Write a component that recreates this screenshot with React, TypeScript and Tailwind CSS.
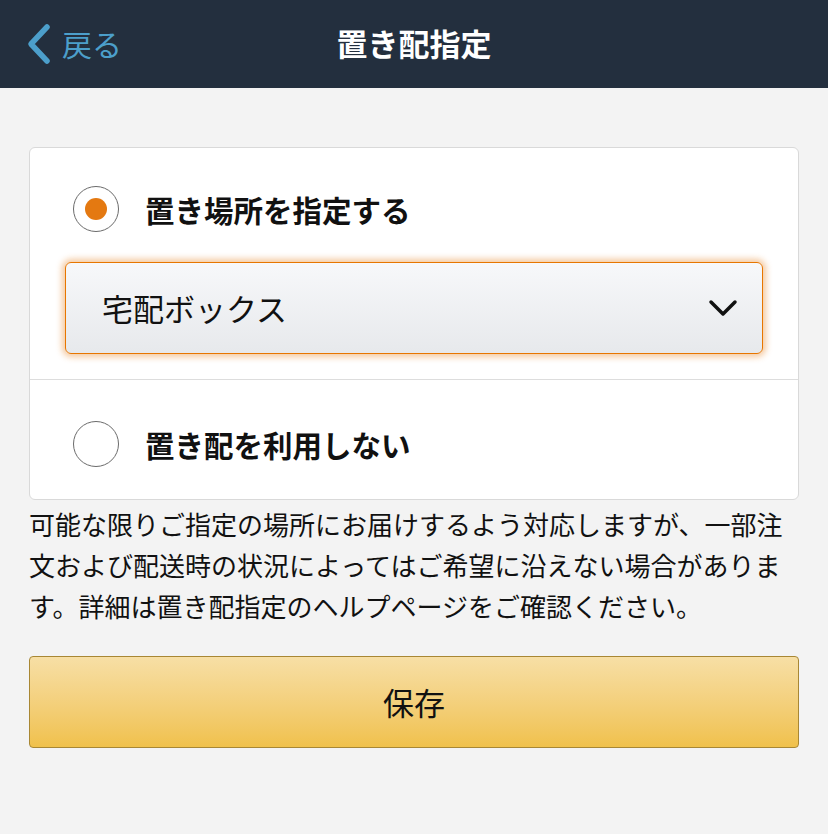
import React, { useState } from "react";

const font = { fontFamily: '"Noto Sans CJK JP", "Noto Sans", sans-serif' };

const Radio = ({ checked }: { checked: boolean }) => (
  <span className="flex h-[46px] w-[46px] shrink-0 items-center justify-center rounded-full border-[1.5px] border-[#6b6b6b] bg-white">
    {checked && <span className="h-[22px] w-[22px] rounded-full bg-[#e47911]" />}
  </span>
);

const App = () => {
  const [useDrop, setUseDrop] = useState<boolean>(true);
  return (
    <div className="min-h-[834px] w-[828px] bg-[#f3f3f3]" style={font}>
      <header className="relative flex h-[88px] items-center bg-[#232f3e]">
        <a href="#" className="flex items-center gap-[10px] pl-[26px] text-[30px] text-[#4c9fcb]">
          <svg width="26" height="42" viewBox="0 0 26 42" fill="none">
            <path d="M21 4 L5 21 L21 38" stroke="#4c9fcb" strokeWidth="5.5" strokeLinecap="round" strokeLinejoin="round" />
          </svg>
          <span className="leading-none -mt-[2px]">戻る</span>
        </a>
        <h1 className="absolute left-1/2 -translate-x-1/2 -mt-[4px] text-[31px] font-bold leading-none text-white">
          置き配指定
        </h1>
      </header>

      <main className="px-[29px] pt-[59px]">
        <div className="rounded-[6px] border border-[#d9d9d9] bg-white">
          <div className="px-[35px] pt-[38px] pb-[25px]">
            <button
              type="button"
              className="flex items-center gap-[26px] pl-[8px]"
              onClick={() => setUseDrop(true)}
            >
              <Radio checked={useDrop} />
              <span className="text-[29.5px] font-bold text-[#111]">置き場所を指定する</span>
            </button>
            <div className="mt-[30px] flex h-[92px] items-center justify-between rounded-[6px] border-[1.5px] border-[#e77600] bg-gradient-to-b from-[#f7f8fa] to-[#e7e9ec] pl-[36px] pr-[24px] shadow-[0_0_6px_3px_rgba(228,121,17,0.4)]">
              <span className="text-[31px] text-[#111]">宅配ボックス</span>
              <svg width="30" height="20" viewBox="0 0 30 20" fill="none">
                <path d="M3 4 L15 16 L27 4" stroke="#111" strokeWidth="3.5" strokeLinecap="round" strokeLinejoin="round" />
              </svg>
            </div>
          </div>
          <div className="border-t border-[#dddddd] px-[35px] pt-[41px] pb-[32px]">
            <button
              type="button"
              className="flex items-center gap-[26px] pl-[8px]"
              onClick={() => setUseDrop(false)}
            >
              <Radio checked={!useDrop} />
              <span className="text-[29.5px] font-bold text-[#111]">置き配を利用しない</span>
            </button>
          </div>
        </div>

        <p className="mt-[3px] text-[26px] leading-[41px] text-[#111]">
          可能な限りご指定の場所にお届けするよう対応しますが、一部注文および配送時の状況によってはご希望に沿えない場合があります。詳細は置き配指定のヘルプページをご確認ください。
        </p>

        <button
          type="button"
          className="mt-[30px] flex h-[92px] w-full items-center justify-center rounded-[4px] border border-[#a88734] bg-gradient-to-b from-[#f7dfa5] to-[#f0c14b] text-[31px] text-[#111]"
        >
          保存
        </button>
      </main>
    </div>
  );
};

export default App;
